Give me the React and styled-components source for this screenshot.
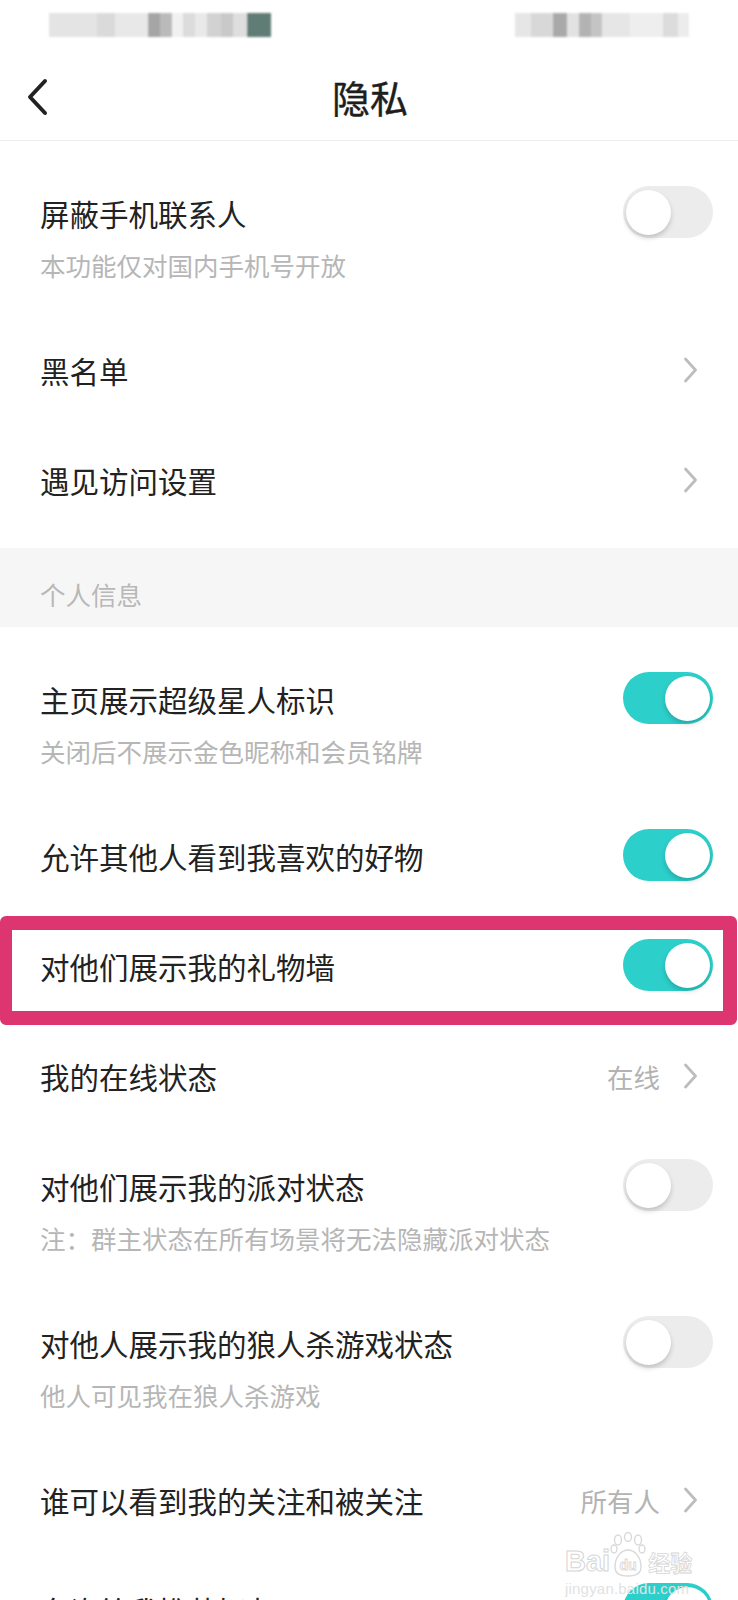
import styled, { createGlobalStyle } from "styled-components"

const GlobalStyle = createGlobalStyle`
  html, body {
    margin: 0;
    padding: 0;
    background: #ffffff;
  }
  body {
    font-family: "Noto Sans CJK SC", "Noto Sans", sans-serif;
    color: #222222;
  }
`

const leftCells = [
    ["#e4e4e4", 49, 48], ["#dadada", 97, 18], ["#e8e8e8", 115, 33], ["#a5a5a5", 148, 12],
    ["#bababa", 160, 12], ["#f1f1f1", 172, 11], ["#dcdcdc", 183, 12], ["#e9e9e9", 195, 12],
    ["#d2d2d2", 207, 14], ["#c9c9c9", 221, 12], ["#dedede", 233, 14], ["#5f7b74", 247, 24],
]
const rightCells = [
    ["#e6e6e6", 515, 16], ["#d8d8d8", 531, 22], ["#a9a9a9", 553, 14], ["#e2e2e2", 567, 12],
    ["#b3b3b3", 579, 12], ["#c4c4c4", 591, 11], ["#e6e6e6", 602, 28], ["#eeeeee", 630, 33],
    ["#dcdcdc", 663, 15], ["#ececec", 678, 11],
]

const items1 = [
    { title: "屏蔽手机联系人", sub: "本功能仅对国内手机号开放", toggle: false },
    { title: "黑名单", arrow: true },
    { title: "遇见访问设置", arrow: true },
]

const items2 = [
    { title: "主页展示超级星人标识", sub: "关闭后不展示金色昵称和会员铭牌", toggle: true },
    { title: "允许其他人看到我喜欢的好物", toggle: true },
    { title: "对他们展示我的礼物墙", toggle: true, marked: true },
    { title: "我的在线状态", value: "在线", arrow: true },
    { title: "对他们展示我的派对状态", sub: "注：群主状态在所有场景将无法隐藏派对状态", toggle: false },
    { title: "对他人展示我的狼人杀游戏状态", sub: "他人可见我在狼人杀游戏", toggle: false },
    { title: "谁可以看到我的关注和被关注", value: "所有人", arrow: true },
    { title: "允许给我推荐好友", toggle: true },
]

function Row({ item }) {
    return (
        <RowBox>
            {item.marked && <Highlight />}
            <TextCol>
                <Title>{item.title}</Title>
                {item.sub && <Sub>{item.sub}</Sub>}
            </TextCol>
            {item.toggle !== undefined && (
                <Switch $on={item.toggle}>
                    <Knob />
                </Switch>
            )}
            {item.arrow && (
                <Trailing>
                    {item.value && <Value>{item.value}</Value>}
                    <svg width="15" height="26" viewBox="0 0 15 26">
                        <path d="M2.5 2 L12.5 13 L2.5 24" fill="none" stroke="#bdbdbd" strokeWidth="2.8" strokeLinecap="round" strokeLinejoin="round" />
                    </svg>
                </Trailing>
            )}
        </RowBox>
    )
}

export default function App() {
    return (
        <Page>
            <GlobalStyle />
            <StatusBar>
                <svg width="738" height="50" viewBox="0 0 738 50">
                    <defs>
                        <filter id="soft" x="-5%" y="-30%" width="110%" height="160%">
                            <feGaussianBlur stdDeviation="1.2" />
                        </filter>
                    </defs>
                    <g filter="url(#soft)">
                        {leftCells.map(([c, x, w]) => <rect key={"l" + x} x={x} y="13" width={w} height="24" fill={c} />)}
                        {rightCells.map(([c, x, w]) => <rect key={"r" + x} x={x} y="13" width={w} height="24" fill={c} />)}
                    </g>
                </svg>
            </StatusBar>
            <Header>
                <Back>
                    <svg width="24" height="38" viewBox="0 0 24 38">
                        <path d="M20 3 L5 19 L20 35" fill="none" stroke="#222" strokeWidth="4" strokeLinecap="round" strokeLinejoin="round" />
                    </svg>
                </Back>
                <HeaderTitle>隐私</HeaderTitle>
                <span />
            </Header>
            <Group $bottom={13}>
                {items1.map((it) => <Row key={it.title} item={it} />)}
            </Group>
            <SectionBand>个人信息</SectionBand>
            <Group $bottom={0}>
                {items2.map((it) => <Row key={it.title} item={it} />)}
            </Group>
            <Watermark>
                <WmTop>
                    <WmLatin>Bai</WmLatin>
                    <Paw>
                        <svg width="36" height="46" viewBox="0 0 36 46">
                            <g fill="none" stroke="#d9d9d9" strokeWidth="1.4">
                                <ellipse cx="8" cy="8" rx="3.5" ry="5" />
                                <ellipse cx="18" cy="5" rx="3.5" ry="4.5" />
                                <ellipse cx="28" cy="8" rx="3.5" ry="5" />
                                <ellipse cx="4" cy="17" rx="3" ry="4" />
                                <ellipse cx="32" cy="17" rx="3" ry="4" />
                                <path d="M5 35 C5 24 12 18 18 18 C24 18 31 24 31 35 C31 42 26 44 18 44 C10 44 5 42 5 35 Z" />
                            </g>
                            <text x="18" y="38" textAnchor="middle" fontFamily="Liberation Sans, sans-serif" fontSize="14" fontWeight="700" fill="none" stroke="#d9d9d9" strokeWidth="0.9">du</text>
                        </svg>
                    </Paw>
                    <WmCjk>经验</WmCjk>
                </WmTop>
                <WmUrl>jingyan.baidu.com</WmUrl>
            </Watermark>
        </Page>
    )
}

const Page = styled.div`
position: relative;
width: 738px;
height: 1600px;
overflow: hidden;
background: #ffffff;
`
const StatusBar = styled.div`
height: 50px;
svg{
    display: block;
}
`
const Header = styled.div`
height: 90px;
display: grid;
grid-template-columns: 1fr auto 1fr;
align-items: center;
border-bottom: 1px solid #eeeeee;
`
const Back = styled.div`
padding-left: 25px;
display: flex;
align-items: center;
margin-top: 4px;
svg{
    display: block;
}
`
const HeaderTitle = styled.div`
font-size: 38px;
font-weight: 400;
line-height: 50px;
color: #1e1e1e;
margin-top: 4px;
margin-left: 2px;
-webkit-text-stroke: 0.4px #1e1e1e;
`
const Group = styled.div`
padding: 17px 0 ${(p) => p.$bottom}px;
`
const RowBox = styled.div`
position: relative;
display: flex;
align-items: flex-start;
padding: 35px 25px 35px 40px;
`
const Highlight = styled.div`
position: absolute;
left: 0;
right: 1px;
top: 5px;
height: 109px;
box-sizing: border-box;
border: 14px solid #dc3570;
border-left-width: 12px;
border-radius: 6px;
pointer-events: none;
`
const TextCol = styled.div`
flex: 1;
display: flex;
flex-direction: column;
`
const Title = styled.div`
font-size: 29.5px;
line-height: 40px;
color: #222222;
white-space: nowrap;
`
const Sub = styled.div`
font-size: 25.5px;
line-height: 30px;
margin-top: 17px;
color: #b6b6b6;
white-space: nowrap;
`
const Switch = styled.div`
width: 90px;
height: 52px;
margin: -7px 0 -12px;
box-sizing: border-box;
border-radius: 26px;
padding: 0 3px;
display: flex;
align-items: center;
justify-content: ${(p) => (p.$on ? "flex-end" : "flex-start")};
background: ${(p) => (p.$on ? "#2ccfca" : "#ececec")};
`
const Knob = styled.div`
width: 45px;
height: 45px;
border-radius: 50%;
background: #ffffff;
box-shadow: 0px 3px 5px rgba(0, 0, 0, 0.18);
`
const Trailing = styled.div`
height: 40px;
display: flex;
align-items: center;
gap: 23px;
margin-right: 15px;
svg{
    display: block;
}
`
const Value = styled.span`
font-size: 26.5px;
color: #b3b3b3;
`
const SectionBand = styled.div`
height: 79px;
box-sizing: border-box;
padding: 30px 0 0 40px;
background: #f6f6f6;
font-size: 25.5px;
line-height: 32px;
color: #b8b8b8;
`
const Watermark = styled.div`
position: absolute;
left: 565px;
top: 1532px;
display: flex;
flex-direction: column;
align-items: flex-start;
pointer-events: none;
`
const WmTop = styled.div`
display: flex;
align-items: flex-end;
height: 46px;
`
const WmLatin = styled.span`
font-family: "Liberation Sans", sans-serif;
font-weight: 700;
font-size: 29px;
line-height: 30px;
color: transparent;
-webkit-text-stroke: 1px #d6d6d6;
margin-bottom: 2px;
`
const Paw = styled.span`
display: flex;
svg{
    display: block;
}
`
const WmCjk = styled.span`
font-family: "Noto Sans CJK SC", sans-serif;
font-weight: 700;
font-size: 22px;
line-height: 28px;
color: transparent;
-webkit-text-stroke: 0.8px #d6d6d6;
margin-bottom: 3px;
margin-left: 2px;
`
const WmUrl = styled.span`
font-family: "Liberation Sans", sans-serif;
font-size: 15px;
line-height: 18px;
margin-top: 2px;
letter-spacing: 0.2px;
color: #e2e2e2;
`
